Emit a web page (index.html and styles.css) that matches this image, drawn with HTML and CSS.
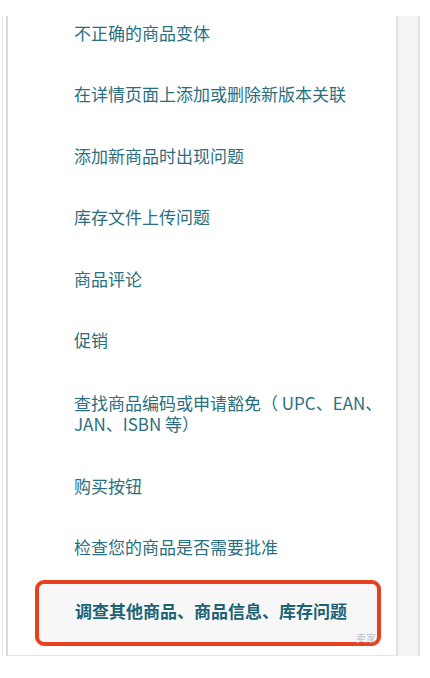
FILE: index.html
```html
<!DOCTYPE html>
<html lang="zh-CN">
<head>
    <meta charset="UTF-8">
    <title>商品问题</title>
    <link rel="stylesheet" href="styles.css">
</head>
<body>
    <div class="frame">
        <div class="edge"></div>
        <div class="panel">
            <ul class="topics">
                <li>不正确的商品变体</li>
                <li>在详情页面上添加或删除新版本关联</li>
                <li>添加新商品时出现问题</li>
                <li>库存文件上传问题</li>
                <li>商品评论</li>
                <li>促销</li>
                <li class="wrap">查找商品编码或申请豁免（ UPC、EAN、JAN、ISBN 等）</li>
                <li>购买按钮</li>
                <li>检查您的商品是否需要批准</li>
                <li class="highlight">调查其他商品、商品信息、库存问题</li>
            </ul>
            <span class="mark">卖家</span>
        </div>
        <div class="side"></div>
    </div>
</body>
</html>
```

FILE: styles.css
```css
/* 页面 */
body {
    margin: 0;
    background: #fff;
    font-family: "Noto Sans CJK SC", "Noto Sans", sans-serif;
}

.frame {
    display: flex;
    margin: 16px 0 0 2px;
    width: 418px;
    height: 640px;
}

.edge {
    width: 3px;
    border-left: 1px solid #e8e8e8;
    border-right: 2px solid #dcdcdc;
}

.panel {
    position: relative;
    flex: 1;
    background: #fff;
    border-right: 2px solid #e0e0e0;
    border-bottom: 1px solid #e6e6e6;
}

.side {
    width: 20px;
    background: #f4f4f4;
    border-right: 2px solid #e4e4e4;
}

/* 列表 */
.topics {
    list-style: none;
    margin: 0;
    padding: 6px 0 0;
}

.topics li {
    padding: 0 0 40.4px 66px;
    font-size: 17px;
    line-height: 21px;
    color: #2a6f80;
}

.topics li.wrap {
    padding-top: 2px;
}

.topics li.highlight {
    margin: -18px 15px 0 27px;
    padding: 16px 0 21px 36px;
    border: 4px solid #e8401c;
    border-radius: 9px;
    background: #f7f7f8;
    font-weight: bold;
    color: #1d6275;
}

.mark {
    position: absolute;
    right: 20px;
    bottom: 10px;
    font-size: 10px;
    color: #b8c4d4;
}
```
